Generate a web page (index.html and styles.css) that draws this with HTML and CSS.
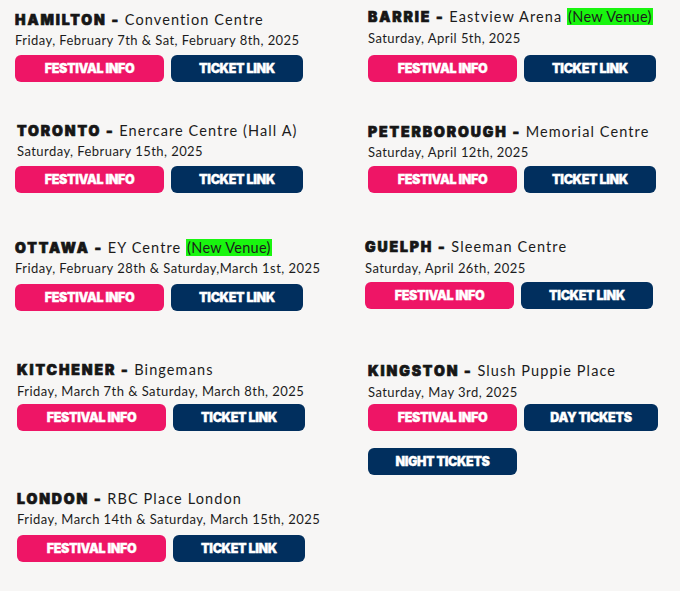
FILE: index.html
```html
<!DOCTYPE html>
<html lang="en">
<head>
<meta charset="utf-8">
<title>Festival Dates</title>
<link rel="stylesheet" href="styles.css">
</head>
<body>
<main class="schedule">
  <section class="ev ev--down3">
    <h3 class="ev__title"><span class="ev__city">HAMILTON -</span> Convention Centre</h3>
    <p class="ev__date">Friday, February 7th &amp; Sat, February 8th, 2025</p>
    <div class="ev__btns">
      <a class="btn btn--info" href="#">FESTIVAL INFO</a>
      <a class="btn btn--ticket" href="#">TICKET LINK</a>
    </div>
  </section>
  <section class="ev">
    <h3 class="ev__title"><span class="ev__city">BARRIE -</span> Eastview Arena <mark class="new">(New Venue)</mark></h3>
    <p class="ev__date ev__date--low">Saturday, April 5th, 2025</p>
    <div class="ev__btns gap-8">
      <a class="btn btn--info" href="#">FESTIVAL INFO</a>
      <a class="btn btn--ticket" href="#">TICKET LINK</a>
    </div>
  </section>

  <section class="ev">
    <h3 class="ev__title ev__title--in"><span class="ev__city">TORONTO -</span> Enercare Centre (Hall A)</h3>
    <p class="ev__date ev__date--in">Saturday, February 15th, 2025</p>
    <div class="ev__btns">
      <a class="btn btn--info" href="#">FESTIVAL INFO</a>
      <a class="btn btn--ticket" href="#">TICKET LINK</a>
    </div>
  </section>
  <section class="ev ev--down1">
    <h3 class="ev__title"><span class="ev__city">PETERBOROUGH -</span> Memorial Centre</h3>
    <p class="ev__date">Saturday, April 12th, 2025</p>
    <div class="ev__btns gap-4">
      <a class="btn btn--info" href="#">FESTIVAL INFO</a>
      <a class="btn btn--ticket" href="#">TICKET LINK</a>
    </div>
  </section>

  <section class="ev ev--down1">
    <h3 class="ev__title"><span class="ev__city">OTTAWA -</span> EY Centre <mark class="new">(New Venue)</mark></h3>
    <p class="ev__date">Friday, February 28th &amp; Saturday,March 1st, 2025</p>
    <div class="ev__btns gap-6">
      <a class="btn btn--info" href="#">FESTIVAL INFO</a>
      <a class="btn btn--ticket" href="#">TICKET LINK</a>
    </div>
  </section>
  <section class="ev ev--out3">
    <h3 class="ev__title"><span class="ev__city">GUELPH -</span> Sleeman Centre</h3>
    <p class="ev__date ev__date--low">Saturday, April 26th, 2025</p>
    <div class="ev__btns gap-5">
      <a class="btn btn--info" href="#">FESTIVAL INFO</a>
      <a class="btn btn--ticket" href="#">TICKET LINK</a>
    </div>
  </section>

  <section class="ev ev--in2">
    <h3 class="ev__title"><span class="ev__city">KITCHENER -</span> Bingemans</h3>
    <p class="ev__date ev__date--low">Friday, March 7th &amp; Saturday, March 8th, 2025</p>
    <div class="ev__btns gap-4">
      <a class="btn btn--info" href="#">FESTIVAL INFO</a>
      <a class="btn btn--ticket" href="#">TICKET LINK</a>
    </div>
  </section>
  <section class="ev ev--down1">
    <h3 class="ev__title"><span class="ev__city">KINGSTON -</span> Slush Puppie Place</h3>
    <p class="ev__date ev__date--low">Saturday, May 3rd, 2025</p>
    <div class="ev__btns gap-3">
      <a class="btn btn--info" href="#">FESTIVAL INFO</a>
      <a class="btn btn--ticket btn--day" href="#">DAY TICKETS</a>
    </div>
    <div class="ev__btns gap-17">
      <a class="btn btn--ticket btn--wide" href="#">NIGHT TICKETS</a>
    </div>
  </section>

  <section class="ev ev--in2">
    <h3 class="ev__title"><span class="ev__city">LONDON -</span> RBC Place London</h3>
    <p class="ev__date">Friday, March 14th &amp; Saturday, March 15th, 2025</p>
    <div class="ev__btns gap-6">
      <a class="btn btn--info" href="#">FESTIVAL INFO</a>
      <a class="btn btn--ticket" href="#">TICKET LINK</a>
    </div>
  </section>
</main>
</body>
</html>
```

FILE: styles.css
```css
html, body {
  margin: 0;
  padding: 0;
  background: #f7f6f5;
}

body {
  font-family: Lato, "Liberation Sans", sans-serif;
  color: #1c1c1c;
}

.schedule {
  display: grid;
  grid-template-columns: 353px 1fr;
  grid-template-rows: 114px 116px 123px 129px auto;
  padding: 7px 0 0 15px;
  align-items: start;
}

.ev {
  display: flex;
  flex-direction: column;
  align-items: flex-start;
}

.ev--down1 { margin-top: 1px; }
.ev--down3 { margin-top: 3px; }
.ev--in2 { margin-left: 2px; }
.ev--out3 { margin-left: -3px; }

.ev__title {
  margin: 0;
  height: 20px;
  line-height: 20px;
  font-size: 14.5px;
  font-weight: 400;
  letter-spacing: 1.1px;
  white-space: nowrap;
}

.ev__title--in { margin-left: 2px; }

.ev__city {
  font-family: Inter, "Liberation Sans", sans-serif;
  font-weight: 900;
  font-size: 14px;
  letter-spacing: 1.9px;
  color: #161616;
  -webkit-text-stroke: 0.7px #161616;
}

.new {
  background: #19f50f;
  color: #1c1c1c;
  letter-spacing: 0.3px;
  padding: 0 1px;
}

.ev__date {
  margin: 0;
  height: 20px;
  line-height: 20px;
  font-size: 13px;
  letter-spacing: 0.45px;
  white-space: nowrap;
}

.ev__date--low { line-height: 22px; }
.ev__date--in { margin-left: 2px; }

.ev__btns {
  display: flex;
  gap: 7px;
  margin-top: 5px;
}

.gap-3 { margin-top: 3px; }
.gap-4 { margin-top: 4px; }
.gap-5 { margin-top: 5px; }
.gap-6 { margin-top: 6px; }
.gap-8 { margin-top: 8px; }
.gap-17 { margin-top: 17px; }

.btn {
  display: flex;
  align-items: center;
  justify-content: center;
  height: 27px;
  border-radius: 6px;
  color: #ffffff;
  text-decoration: none;
  font-family: Inter, "Liberation Sans", sans-serif;
  font-weight: 900;
  font-size: 12.5px;
  letter-spacing: -0.35px;
  -webkit-text-stroke: 0.3px #ffffff;
}

.btn--info {
  width: 149px;
  background: #ee1566;
}

.btn--ticket {
  width: 132px;
  background: #012f5e;
}

.btn--day { width: 134px; }
.btn--wide { width: 149px; }
```
